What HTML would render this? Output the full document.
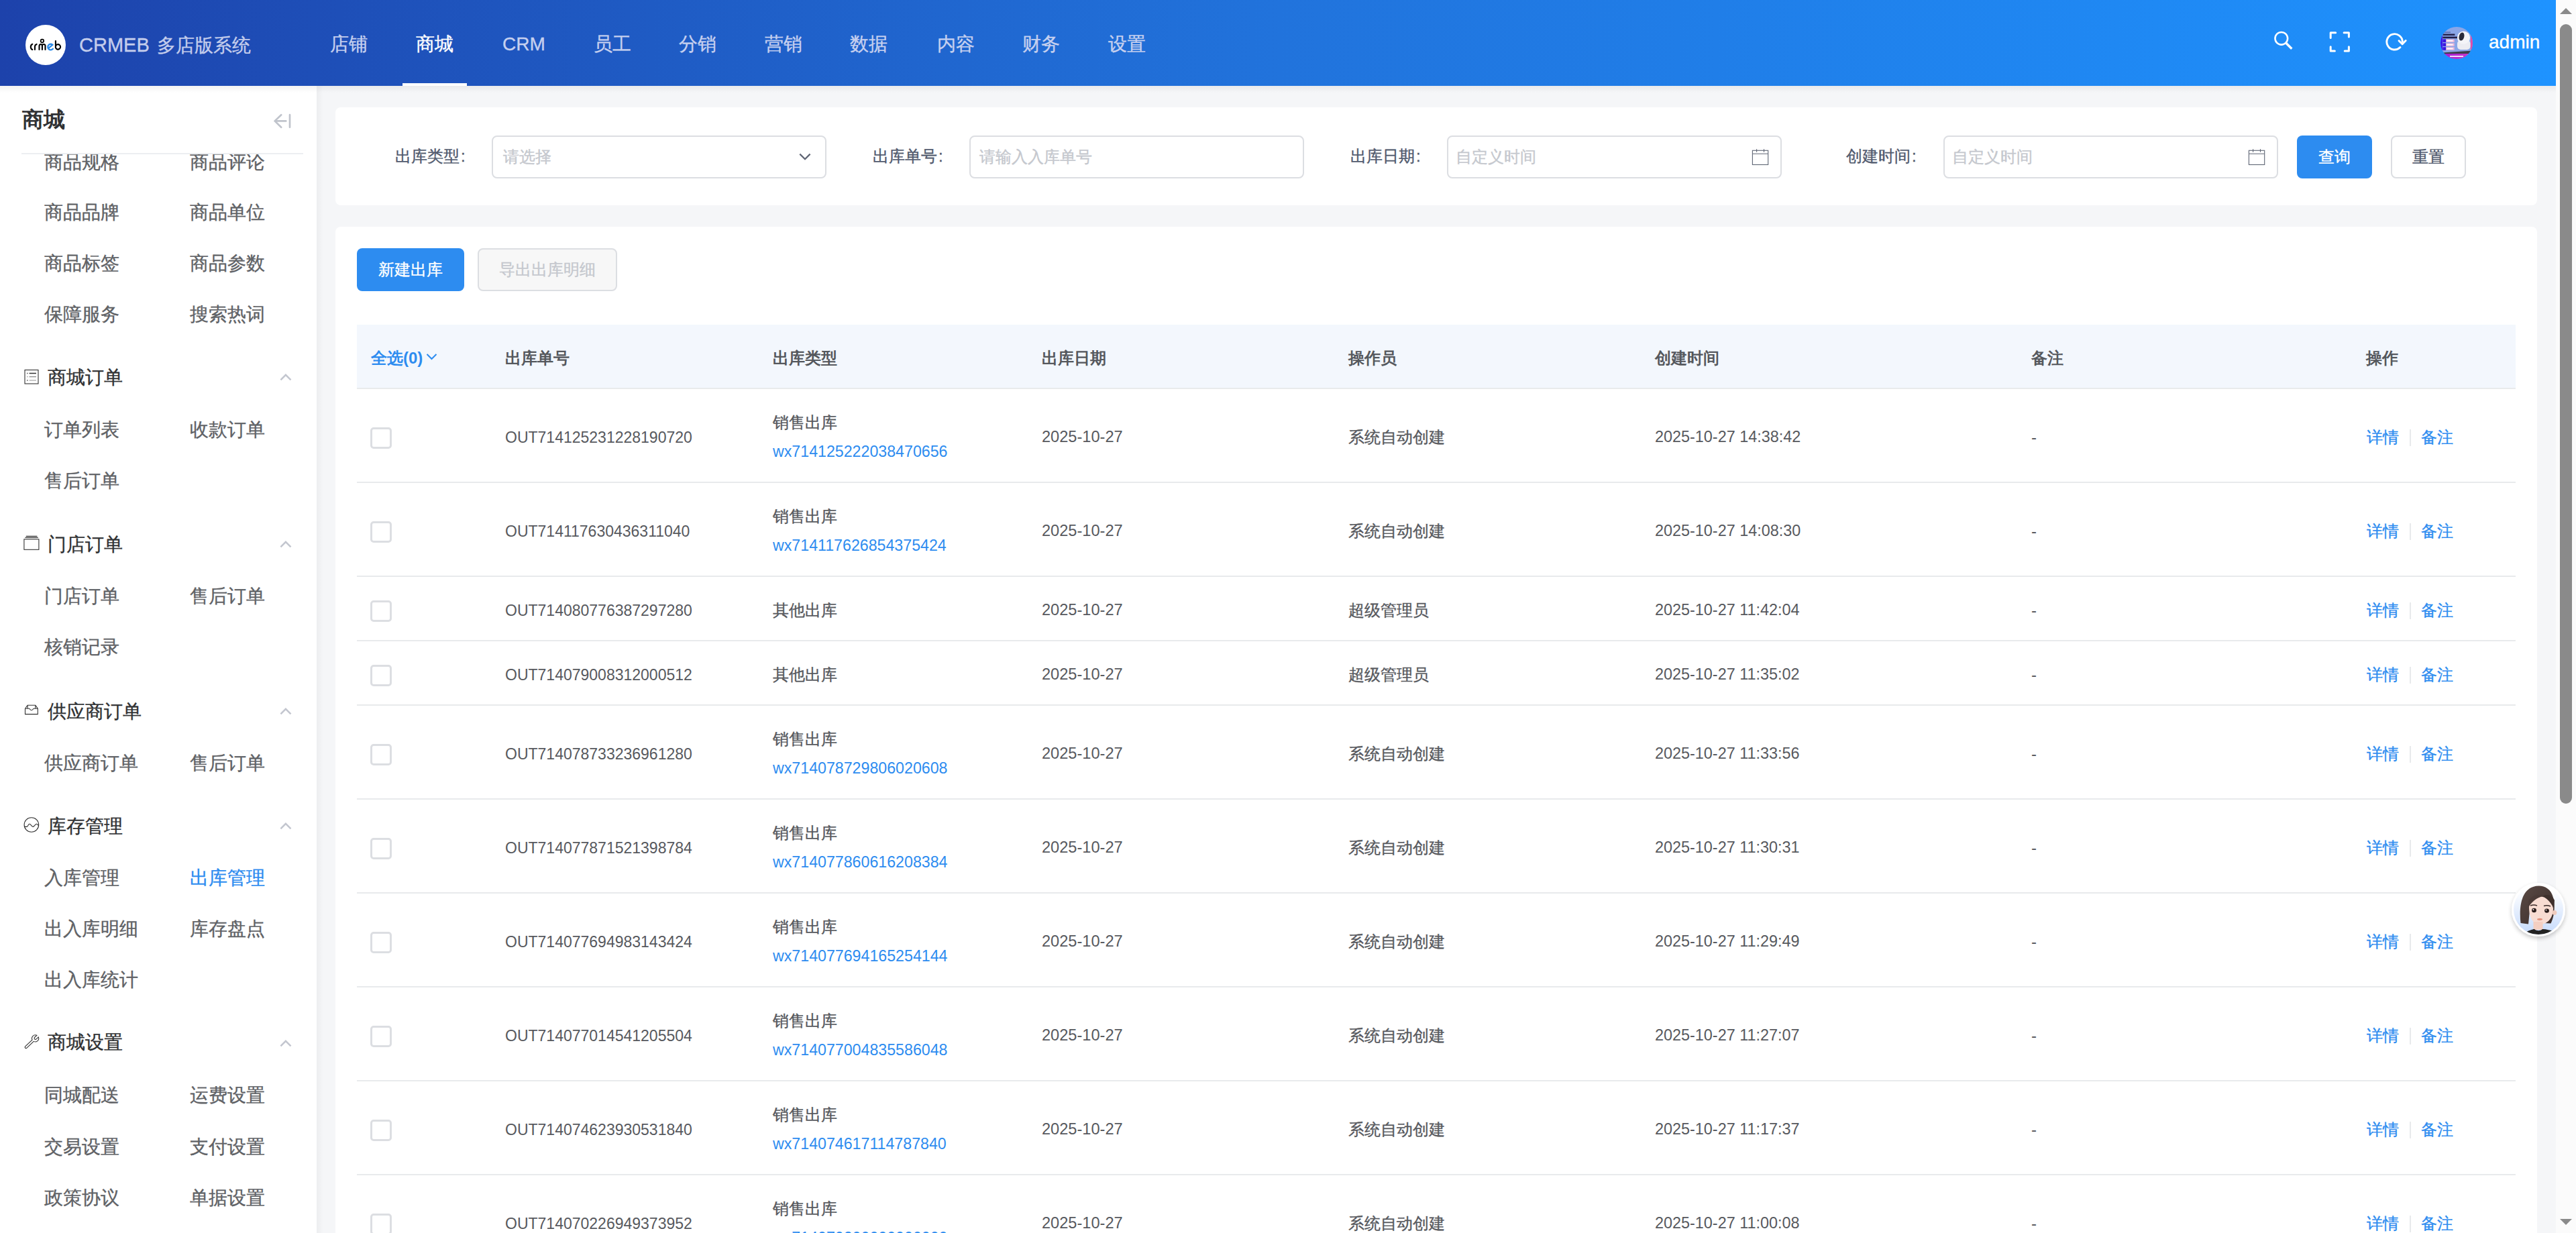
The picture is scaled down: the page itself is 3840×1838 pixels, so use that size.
<!DOCTYPE html>
<html><head><meta charset="utf-8"><style>
*{box-sizing:border-box;margin:0;padding:0}
html,body{width:3840px;height:1838px;overflow:hidden;background:#f5f6f8;font-family:"Liberation Sans",sans-serif}
.a{position:absolute}
.t{position:absolute;white-space:nowrap;line-height:1;-webkit-text-stroke:0.35px currentColor}
#hdr{left:0;top:0;width:3810px;height:128px;background:linear-gradient(90deg,#1d42ab 0%,#2173dc 50%,#1e93ff 100%)}
.nav{font-size:28px;color:#c6d0ef}
.nav.on{color:#fff}
#side{left:0;top:128px;width:472px;height:1710px;background:#fff;overflow:hidden}
.sg{font-size:28px;color:#303133}
.si{font-size:28px;color:#606266}
.card{position:absolute;background:#fff;border-radius:8px}
.lbl{font-size:24px;color:#515a6e}
.inp{position:absolute;border:2px solid #dcdee2;border-radius:8px;background:#fff;height:64px;width:499px;top:202px}
.ph{font-size:24px;color:#c5c8ce}
.th{font-size:24px;font-weight:bold;color:#55585d;-webkit-text-stroke:0}
.ns{-webkit-text-stroke:0}
.td{font-size:24px;color:#57595e}
.lk{font-size:24px;color:#2d8cf0}
.cb{position:absolute;width:32px;height:32px;border:3px solid #dcdee2;border-radius:5px;background:#fff}
.rl{position:absolute;left:532px;width:3218px;height:2px;background:#e8eaec}
</style></head><body>
<div id="hdr" class="a">
<svg class="a" style="left:38px;top:37px" width="60" height="60" viewBox="0 0 60 60">
<circle cx="30" cy="30" r="30" fill="#fff"/>
<g fill="none" stroke="#000" stroke-width="2.1" stroke-linecap="round">
<path d="M10.3 28.8 A4.6 4.6 0 0 0 10.3 37"/>
<path d="M14 37 V32.5 Q14 29.6 16.6 28.9"/>
<path d="M20.5 37 V31.5 A2.2 2.5 0 0 1 24.9 31.5 V37 M24.9 31.5 A2.3 2.5 0 0 1 29.5 31.5 V37"/>
<circle cx="24.9" cy="24" r="2.3" stroke-width="1.7"/>
<path d="M44.9 24 V34 A3.7 3.7 0 1 0 45 31.5"/>
</g>
<path d="M34 35.2 L40.4 29.8 A4.3 4.3 0 1 0 40.9 35.8" fill="none" stroke="#2a8ae8" stroke-width="2.3" stroke-linecap="round"/>
</svg>
<div class="t " style="left:118px;top:67px;transform:translateY(-50%);font-size:29px;color:#c4cdec">CRMEB<span style="margin-left:3px"> </span><span style="font-size:28px">多店版系统</span></div>
<div class="t nav" style="left:492px;top:66px;transform:translateY(-50%);">店铺</div>
<div class="t nav on" style="left:620px;top:66px;transform:translateY(-50%);">商城</div>
<div class="t nav" style="left:749px;top:66px;transform:translateY(-50%);">CRM</div>
<div class="t nav" style="left:885px;top:66px;transform:translateY(-50%);">员工</div>
<div class="t nav" style="left:1012px;top:66px;transform:translateY(-50%);">分销</div>
<div class="t nav" style="left:1140px;top:66px;transform:translateY(-50%);">营销</div>
<div class="t nav" style="left:1267px;top:66px;transform:translateY(-50%);">数据</div>
<div class="t nav" style="left:1397px;top:66px;transform:translateY(-50%);">内容</div>
<div class="t nav" style="left:1524px;top:66px;transform:translateY(-50%);">财务</div>
<div class="t nav" style="left:1652px;top:66px;transform:translateY(-50%);">设置</div>
<div class="a" style="left:600px;top:124px;width:96px;height:4px;background:#fff"></div>
<svg class="a" style="left:3380px;top:38px" width="50" height="45" viewBox="0 0 50 45"><circle cx="20.8" cy="19.3" r="9.35" fill="none" stroke="#fff" stroke-width="2.6"/><path d="M27.3 25.8 L36.3 34.8" stroke="#fff" stroke-width="3.4"/></svg>
<svg class="a" style="left:3462px;top:38px" width="50" height="45" viewBox="0 0 50 45"><path d="M12.2 18.4 V10.8 H19.7 M32.1 10.8 H39.4 V17 M12.2 31.8 V38 H18.4 M33.2 38 H39.4 V31.8" fill="none" stroke="#fff" stroke-width="3" stroke-linecap="round" stroke-linejoin="round"/></svg>
<svg class="a" style="left:3545px;top:40px" width="50" height="45" viewBox="0 0 50 45"><path d="M32.9 30.6 A11.7 11.7 0 1 1 36.3 22.3" fill="none" stroke="#fff" stroke-width="2.9" stroke-linecap="round"/><path d="M31 20.8 L36.1 25.8 L41.2 20.5" fill="none" stroke="#fff" stroke-width="2.9" stroke-linecap="round" stroke-linejoin="round"/></svg>
<svg class="a" style="left:3638px;top:40px" width="48" height="48" viewBox="0 0 48 48"><defs><clipPath id="av"><circle cx="24" cy="24" r="24"/></clipPath><linearGradient id="avb" x1="0" y1="0" x2="1" y2="0"><stop offset="0" stop-color="#9a18d8"/><stop offset="1" stop-color="#d03cc8"/></linearGradient></defs><g clip-path="url(#av)">
<rect width="48" height="48" fill="#8aa6e8"/>
<rect x="0" y="0" width="3" height="48" fill="#3a18e8"/><rect x="45" y="0" width="3" height="48" fill="#e04aa8"/>
<rect x="5" y="7.5" width="10" height="1.2" fill="#5060a0"/><rect x="3.4" y="10.5" width="18" height="2.4" fill="#22204a"/><rect x="3.4" y="14.6" width="23" height="2.6" fill="#22204a"/>
<rect x="3.4" y="18.4" width="4.6" height="4.6" fill="#3a14e0"/><rect x="8.4" y="18.6" width="12.3" height="4.2" fill="#f2b8d8"/><rect x="9.5" y="19.8" width="9" height="1.8" fill="#fff"/>
<rect x="3.4" y="24.3" width="4.6" height="4.6" fill="#3a14e0"/><rect x="8.4" y="24.5" width="12.3" height="4.2" fill="#f2b8d8"/><rect x="9.5" y="25.7" width="9" height="1.8" fill="#fff"/>
<rect x="3.4" y="30.2" width="4.6" height="4.6" fill="#3a14e0"/><rect x="8.4" y="30.4" width="12.3" height="4.2" fill="#f2b8d8"/><rect x="9.5" y="31.6" width="9" height="1.8" fill="#fff"/>
<rect x="25" y="20" width="19.5" height="14" rx="5" fill="#ececf2"/><circle cx="34.5" cy="16" r="9.6" fill="#f4f4f8"/>
<ellipse cx="31.5" cy="14.5" rx="3.8" ry="6.2" transform="rotate(15 31.5 14.5)" fill="#2a2a3a"/>
<path d="M3 38.5 L48 35.5 L48 40 L3 41.5Z" fill="#3c3c48"/>
<rect x="0" y="40" width="48" height="8" fill="url(#avb)"/>
<rect x="14" y="43" width="20" height="2" fill="#f0d8f8"/>
</g></svg>
<div class="t " style="left:3710px;top:63px;transform:translateY(-50%);font-size:28px;color:#fff">admin</div>
</div>
<div class="a" style="left:0;top:128px;width:3810px;height:10px;background:linear-gradient(rgba(0,0,0,0.05),rgba(0,0,0,0));z-index:5"></div>
<div class="a" style="left:3810px;top:0;width:30px;height:1838px;background:#fbfbfb"></div>
<svg class="a" style="left:3816px;top:11px" width="18" height="10"><path d="M0 10 L9 1 L18 10Z" fill="#8a8a8a"/></svg>
<div class="a" style="left:3816px;top:36px;width:18px;height:1162px;border-radius:9px;background:#8a8a8a"></div>
<svg class="a" style="left:3816px;top:1817px" width="18" height="10"><path d="M0 0 L9 9 L18 0Z" fill="#8a8a8a"/></svg>
<div id="side" class="a">
</div>
<div class="t ns" style="left:33px;top:178px;transform:translateY(-50%);font-size:32px;font-weight:bold;color:#303133">商城</div>
<svg class="a" style="left:395px;top:160px" width="50" height="40" viewBox="395 160 50 40"><path d="M419.2 171.2 L409.6 180.4 L419.2 189.7 M409.6 180.4 H426.3 M432 171.2 V189.7" fill="none" stroke="#c0c4cc" stroke-width="2.7" stroke-linecap="round" stroke-linejoin="round"/></svg>
<div class="a" style="left:32px;top:228px;width:420px;height:2px;background:#eceef1;z-index:3"></div>
<div class="a" style="left:0;top:229px;width:472px;height:1609px;overflow:hidden">
<div class="t si" style="left:66px;top:13px;transform:translateY(-50%);">商品规格</div>
<div class="t si" style="left:283px;top:13px;transform:translateY(-50%);">商品评论</div>
<div class="t si" style="left:66px;top:88px;transform:translateY(-50%);">商品品牌</div>
<div class="t si" style="left:283px;top:88px;transform:translateY(-50%);">商品单位</div>
<div class="t si" style="left:66px;top:164px;transform:translateY(-50%);">商品标签</div>
<div class="t si" style="left:283px;top:164px;transform:translateY(-50%);">商品参数</div>
<div class="t si" style="left:66px;top:240px;transform:translateY(-50%);">保障服务</div>
<div class="t si" style="left:283px;top:240px;transform:translateY(-50%);">搜索热词</div>
<div class="t sg" style="left:71px;top:333.5px;transform:translateY(-50%);">商城订单</div>
<div class="t si" style="left:66px;top:412px;transform:translateY(-50%);">订单列表</div>
<div class="t si" style="left:283px;top:412px;transform:translateY(-50%);">收款订单</div>
<div class="t si" style="left:66px;top:488px;transform:translateY(-50%);">售后订单</div>
<div class="t sg" style="left:71px;top:582.5px;transform:translateY(-50%);">门店订单</div>
<div class="t si" style="left:66px;top:660px;transform:translateY(-50%);">门店订单</div>
<div class="t si" style="left:283px;top:660px;transform:translateY(-50%);">售后订单</div>
<div class="t si" style="left:66px;top:736px;transform:translateY(-50%);">核销记录</div>
<div class="t sg" style="left:71px;top:831.5px;transform:translateY(-50%);">供应商订单</div>
<div class="t si" style="left:66px;top:909px;transform:translateY(-50%);">供应商订单</div>
<div class="t si" style="left:283px;top:909px;transform:translateY(-50%);">售后订单</div>
<div class="t sg" style="left:71px;top:1002.5px;transform:translateY(-50%);">库存管理</div>
<div class="t si" style="left:66px;top:1080px;transform:translateY(-50%);">入库管理</div>
<div class="t si" style="left:283px;top:1080px;transform:translateY(-50%);color:#2d8cf0">出库管理</div>
<div class="t si" style="left:66px;top:1156px;transform:translateY(-50%);">出入库明细</div>
<div class="t si" style="left:283px;top:1156px;transform:translateY(-50%);">库存盘点</div>
<div class="t si" style="left:66px;top:1232px;transform:translateY(-50%);">出入库统计</div>
<div class="t sg" style="left:71px;top:1325.3px;transform:translateY(-50%);">商城设置</div>
<div class="t si" style="left:66px;top:1404px;transform:translateY(-50%);">同城配送</div>
<div class="t si" style="left:283px;top:1404px;transform:translateY(-50%);">运费设置</div>
<div class="t si" style="left:66px;top:1481px;transform:translateY(-50%);">交易设置</div>
<div class="t si" style="left:283px;top:1481px;transform:translateY(-50%);">支付设置</div>
<div class="t si" style="left:66px;top:1557px;transform:translateY(-50%);">政策协议</div>
<div class="t si" style="left:283px;top:1557px;transform:translateY(-50%);">单据设置</div>
</div>
<svg class="a" style="left:0;top:0;z-index:4" width="472" height="1838" viewBox="0 0 472 1838"><g fill="none" stroke="#333" stroke-width="1.1"><rect x="37" y="551.5" width="20" height="20.5"/><path d="M40.2 556.5h1.2M43.6 556.5H54" stroke="#333" stroke-width="1.3"/><path d="M40.2 561.6h1.2M43.6 561.6H54" stroke="#888" stroke-width="1.3"/><path d="M40.2 567h1.2" stroke="#333" stroke-width="1.3"/><path d="M43.6 567H54" stroke="#bbb" stroke-width="1.6"/><rect x="35.9" y="803.8" width="22" height="15.5"/><path d="M37.5 801.35H56.7M38.8 799.4H55.4" stroke-width="1.1"/><path d="M37.5 1056.2V1064.6H56.3V1056.2L52.8 1051.2H41.1L37.5 1056.2M41.1 1051.2V1056.2M52.8 1051.2V1056.2M37.5 1056.2H43.4C44.5 1056.2 45 1058.8 46.9 1058.8C48.8 1058.8 49.3 1056.2 50.4 1056.2H56.3"/><circle cx="46.9" cy="1229.5" r="10.8"/><path d="M36.3 1232.4H40C41.5 1232.4 42.2 1228.3 44 1228.3C45.8 1228.3 47.4 1232.4 49.2 1232.4C51 1232.4 52.6 1228.3 54.5 1228.3C56 1228.3 56.8 1230 57.6 1230.8"/><path transform="translate(38.8 1561) rotate(-43.5)" d="M0 -1.6L14.2 -1.6A5.1 5.1 0 0 1 23.77 -1.8L19.5 -1.8A1.8 1.8 0 0 0 19.5 1.8L23.77 1.8A5.1 5.1 0 0 1 14.2 1.6L0 1.6A1.6 1.6 0 0 1 0 -1.6Z"/></g><g fill="none" stroke="#c3c6cf" stroke-width="2.5"><path d="M418.4 566.4L425.9 558.8L433.5 566.4"/><path d="M418.4 815.4L425.9 807.8L433.5 815.4"/><path d="M418.4 1064.4L425.9 1056.8L433.5 1064.4"/><path d="M418.4 1235.4L425.9 1227.8L433.5 1235.4"/><path d="M418.4 1559.4L425.9 1551.8L433.5 1559.4"/></g></svg>
<div class="a" style="left:472px;top:128px;width:10px;height:1710px;background:linear-gradient(90deg,rgba(0,0,0,0.035),rgba(0,0,0,0))"></div>
<div class="card" style="left:500px;top:160px;width:3282px;height:146px"></div>
<div class="t lbl" style="left:589px;top:233px;transform:translateY(-50%);">出库类型<span style="margin-left:2px">:</span></div>
<div class="t lbl" style="left:1301px;top:233px;transform:translateY(-50%);">出库单号<span style="margin-left:2px">:</span></div>
<div class="t lbl" style="left:2013px;top:233px;transform:translateY(-50%);">出库日期<span style="margin-left:2px">:</span></div>
<div class="t lbl" style="left:2752px;top:233px;transform:translateY(-50%);">创建时间<span style="margin-left:2px">:</span></div>
<div class="inp" style="left:733px"></div>
<div class="t ph" style="left:750px;top:234px;transform:translateY(-50%);">请选择</div>
<svg class="a" style="left:1173px;top:215px" width="50" height="40" viewBox="1173 215 50 40"><path d="M1192.3 229.6 L1200 237.2 L1207.6 229.6" fill="none" stroke="#5f6574" stroke-width="2.3"/></svg>
<div class="inp" style="left:1445px"></div>
<div class="t ph" style="left:1460px;top:234px;transform:translateY(-50%);">请输入入库单号</div>
<div class="inp" style="left:2157px"></div>
<div class="t ph" style="left:2170px;top:234px;transform:translateY(-50%);">自定义时间</div>
<svg class="a" style="left:2597px;top:215px" width="50" height="40" viewBox="2597 215 50 40"><rect x="2612.4" y="224.3" width="23.3" height="21.2" fill="none" stroke="#5f6574" stroke-width="1.1"/><path d="M2612.4 229.2H2635.7M2618.6 222.2V226.8M2629.5 222.2V226.8" stroke="#5f6574" stroke-width="1.1"/></svg>
<div class="inp" style="left:2897px"></div>
<div class="t ph" style="left:2910px;top:234px;transform:translateY(-50%);">自定义时间</div>
<svg class="a" style="left:3337px;top:215px" width="50" height="40" viewBox="3337 215 50 40"><rect x="3352.4" y="224.3" width="23.3" height="21.2" fill="none" stroke="#5f6574" stroke-width="1.1"/><path d="M3352.4 229.2H3375.7M3358.6 222.2V226.8M3369.5 222.2V226.8" stroke="#5f6574" stroke-width="1.1"/></svg>
<div class="a" style="left:3424px;top:202px;width:112px;height:64px;background:#2d8cf0;border-radius:8px"></div>
<div class="t " style="left:3456px;top:234px;transform:translateY(-50%);font-size:24px;color:#fff">查询</div>
<div class="a" style="left:3564px;top:202px;width:112px;height:64px;border:2px solid #dcdee2;border-radius:8px;background:#fff"></div>
<div class="t " style="left:3596px;top:234px;transform:translateY(-50%);font-size:24px;color:#515a6e">重置</div>
<div class="card" style="left:500px;top:338px;width:3282px;height:1600px"></div>
<div class="a" style="left:532px;top:370px;width:160px;height:64px;background:#2d8cf0;border-radius:8px"></div>
<div class="t " style="left:564px;top:402px;transform:translateY(-50%);font-size:24px;color:#fff">新建出库</div>
<div class="a" style="left:712px;top:370px;width:208px;height:64px;background:#f7f7f7;border:2px solid #dcdee2;border-radius:8px"></div>
<div class="t " style="left:744px;top:402px;transform:translateY(-50%);font-size:24px;color:#c5c8ce">导出出库明细</div>
<div class="a" style="left:532px;top:484px;width:3218px;height:95px;background:#f3f7fd"></div>
<div class="rl" style="top:578px"></div>
<div class="t ns" style="left:553px;top:534px;transform:translateY(-50%);font-size:24px;font-weight:bold;color:#2d8cf0">全选(0)</div>
<svg class="a" style="left:630px;top:520px" width="26" height="22" viewBox="630 520 26 22"><path d="M636.5 528 L643.5 535 L650.5 528" fill="none" stroke="#2d8cf0" stroke-width="2.1"/></svg>
<div class="t th" style="left:753px;top:534px;transform:translateY(-50%);">出库单号</div>
<div class="t th" style="left:1152px;top:534px;transform:translateY(-50%);">出库类型</div>
<div class="t th" style="left:1553px;top:534px;transform:translateY(-50%);">出库日期</div>
<div class="t th" style="left:2010px;top:534px;transform:translateY(-50%);">操作员</div>
<div class="t th" style="left:2467px;top:534px;transform:translateY(-50%);">创建时间</div>
<div class="t th" style="left:3028px;top:534px;transform:translateY(-50%);">备注</div>
<div class="t th" style="left:3527px;top:534px;transform:translateY(-50%);">操作</div>
<div class="cb" style="left:552px;top:637.0px"></div>
<div class="t td ns" style="left:753px;top:652.0px;transform:translateY(-50%);font-size:23px">OUT714125231228190720</div>
<div class="t td" style="left:1152px;top:630.0px;transform:translateY(-50%);">销售出库</div>
<div class="t lk ns" style="left:1152px;top:674.0px;transform:translateY(-50%);font-size:23.2px">wx714125222038470656</div>
<div class="t td ns" style="left:1553px;top:652.0px;transform:translateY(-50%);font-size:23.6px">2025-10-27</div>
<div class="t td" style="left:2010px;top:652.0px;transform:translateY(-50%);">系统自动创建</div>
<div class="t td ns" style="left:2467px;top:652.0px;transform:translateY(-50%);font-size:23.4px">2025-10-27 14:38:42</div>
<div class="t td ns" style="left:3028px;top:652.0px;transform:translateY(-50%);">-</div>
<div class="t lk" style="left:3528px;top:652.0px;transform:translateY(-50%);">详情</div>
<div class="a" style="left:3592px;top:640.0px;width:2px;height:25px;background:#e8eaec"></div>
<div class="t lk" style="left:3609px;top:652.0px;transform:translateY(-50%);">备注</div>
<div class="rl" style="top:718px"></div>
<div class="cb" style="left:552px;top:777.0px"></div>
<div class="t td ns" style="left:753px;top:792.0px;transform:translateY(-50%);font-size:23px">OUT714117630436311040</div>
<div class="t td" style="left:1152px;top:770.0px;transform:translateY(-50%);">销售出库</div>
<div class="t lk ns" style="left:1152px;top:814.0px;transform:translateY(-50%);font-size:23.2px">wx714117626854375424</div>
<div class="t td ns" style="left:1553px;top:792.0px;transform:translateY(-50%);font-size:23.6px">2025-10-27</div>
<div class="t td" style="left:2010px;top:792.0px;transform:translateY(-50%);">系统自动创建</div>
<div class="t td ns" style="left:2467px;top:792.0px;transform:translateY(-50%);font-size:23.4px">2025-10-27 14:08:30</div>
<div class="t td ns" style="left:3028px;top:792.0px;transform:translateY(-50%);">-</div>
<div class="t lk" style="left:3528px;top:792.0px;transform:translateY(-50%);">详情</div>
<div class="a" style="left:3592px;top:780.0px;width:2px;height:25px;background:#e8eaec"></div>
<div class="t lk" style="left:3609px;top:792.0px;transform:translateY(-50%);">备注</div>
<div class="rl" style="top:858px"></div>
<div class="cb" style="left:552px;top:895.0px"></div>
<div class="t td ns" style="left:753px;top:910.0px;transform:translateY(-50%);font-size:23px">OUT714080776387297280</div>
<div class="t td" style="left:1152px;top:910.0px;transform:translateY(-50%);">其他出库</div>
<div class="t td ns" style="left:1553px;top:910.0px;transform:translateY(-50%);font-size:23.6px">2025-10-27</div>
<div class="t td" style="left:2010px;top:910.0px;transform:translateY(-50%);">超级管理员</div>
<div class="t td ns" style="left:2467px;top:910.0px;transform:translateY(-50%);font-size:23.4px">2025-10-27 11:42:04</div>
<div class="t td ns" style="left:3028px;top:910.0px;transform:translateY(-50%);">-</div>
<div class="t lk" style="left:3528px;top:910.0px;transform:translateY(-50%);">详情</div>
<div class="a" style="left:3592px;top:898.0px;width:2px;height:25px;background:#e8eaec"></div>
<div class="t lk" style="left:3609px;top:910.0px;transform:translateY(-50%);">备注</div>
<div class="rl" style="top:954px"></div>
<div class="cb" style="left:552px;top:991.0px"></div>
<div class="t td ns" style="left:753px;top:1006.0px;transform:translateY(-50%);font-size:23px">OUT714079008312000512</div>
<div class="t td" style="left:1152px;top:1006.0px;transform:translateY(-50%);">其他出库</div>
<div class="t td ns" style="left:1553px;top:1006.0px;transform:translateY(-50%);font-size:23.6px">2025-10-27</div>
<div class="t td" style="left:2010px;top:1006.0px;transform:translateY(-50%);">超级管理员</div>
<div class="t td ns" style="left:2467px;top:1006.0px;transform:translateY(-50%);font-size:23.4px">2025-10-27 11:35:02</div>
<div class="t td ns" style="left:3028px;top:1006.0px;transform:translateY(-50%);">-</div>
<div class="t lk" style="left:3528px;top:1006.0px;transform:translateY(-50%);">详情</div>
<div class="a" style="left:3592px;top:994.0px;width:2px;height:25px;background:#e8eaec"></div>
<div class="t lk" style="left:3609px;top:1006.0px;transform:translateY(-50%);">备注</div>
<div class="rl" style="top:1050px"></div>
<div class="cb" style="left:552px;top:1109.0px"></div>
<div class="t td ns" style="left:753px;top:1124.0px;transform:translateY(-50%);font-size:23px">OUT714078733236961280</div>
<div class="t td" style="left:1152px;top:1102.0px;transform:translateY(-50%);">销售出库</div>
<div class="t lk ns" style="left:1152px;top:1146.0px;transform:translateY(-50%);font-size:23.2px">wx714078729806020608</div>
<div class="t td ns" style="left:1553px;top:1124.0px;transform:translateY(-50%);font-size:23.6px">2025-10-27</div>
<div class="t td" style="left:2010px;top:1124.0px;transform:translateY(-50%);">系统自动创建</div>
<div class="t td ns" style="left:2467px;top:1124.0px;transform:translateY(-50%);font-size:23.4px">2025-10-27 11:33:56</div>
<div class="t td ns" style="left:3028px;top:1124.0px;transform:translateY(-50%);">-</div>
<div class="t lk" style="left:3528px;top:1124.0px;transform:translateY(-50%);">详情</div>
<div class="a" style="left:3592px;top:1112.0px;width:2px;height:25px;background:#e8eaec"></div>
<div class="t lk" style="left:3609px;top:1124.0px;transform:translateY(-50%);">备注</div>
<div class="rl" style="top:1190px"></div>
<div class="cb" style="left:552px;top:1249.0px"></div>
<div class="t td ns" style="left:753px;top:1264.0px;transform:translateY(-50%);font-size:23px">OUT714077871521398784</div>
<div class="t td" style="left:1152px;top:1242.0px;transform:translateY(-50%);">销售出库</div>
<div class="t lk ns" style="left:1152px;top:1286.0px;transform:translateY(-50%);font-size:23.2px">wx714077860616208384</div>
<div class="t td ns" style="left:1553px;top:1264.0px;transform:translateY(-50%);font-size:23.6px">2025-10-27</div>
<div class="t td" style="left:2010px;top:1264.0px;transform:translateY(-50%);">系统自动创建</div>
<div class="t td ns" style="left:2467px;top:1264.0px;transform:translateY(-50%);font-size:23.4px">2025-10-27 11:30:31</div>
<div class="t td ns" style="left:3028px;top:1264.0px;transform:translateY(-50%);">-</div>
<div class="t lk" style="left:3528px;top:1264.0px;transform:translateY(-50%);">详情</div>
<div class="a" style="left:3592px;top:1252.0px;width:2px;height:25px;background:#e8eaec"></div>
<div class="t lk" style="left:3609px;top:1264.0px;transform:translateY(-50%);">备注</div>
<div class="rl" style="top:1330px"></div>
<div class="cb" style="left:552px;top:1389.0px"></div>
<div class="t td ns" style="left:753px;top:1404.0px;transform:translateY(-50%);font-size:23px">OUT714077694983143424</div>
<div class="t td" style="left:1152px;top:1382.0px;transform:translateY(-50%);">销售出库</div>
<div class="t lk ns" style="left:1152px;top:1426.0px;transform:translateY(-50%);font-size:23.2px">wx714077694165254144</div>
<div class="t td ns" style="left:1553px;top:1404.0px;transform:translateY(-50%);font-size:23.6px">2025-10-27</div>
<div class="t td" style="left:2010px;top:1404.0px;transform:translateY(-50%);">系统自动创建</div>
<div class="t td ns" style="left:2467px;top:1404.0px;transform:translateY(-50%);font-size:23.4px">2025-10-27 11:29:49</div>
<div class="t td ns" style="left:3028px;top:1404.0px;transform:translateY(-50%);">-</div>
<div class="t lk" style="left:3528px;top:1404.0px;transform:translateY(-50%);">详情</div>
<div class="a" style="left:3592px;top:1392.0px;width:2px;height:25px;background:#e8eaec"></div>
<div class="t lk" style="left:3609px;top:1404.0px;transform:translateY(-50%);">备注</div>
<div class="rl" style="top:1470px"></div>
<div class="cb" style="left:552px;top:1529.0px"></div>
<div class="t td ns" style="left:753px;top:1544.0px;transform:translateY(-50%);font-size:23px">OUT714077014541205504</div>
<div class="t td" style="left:1152px;top:1522.0px;transform:translateY(-50%);">销售出库</div>
<div class="t lk ns" style="left:1152px;top:1566.0px;transform:translateY(-50%);font-size:23.2px">wx714077004835586048</div>
<div class="t td ns" style="left:1553px;top:1544.0px;transform:translateY(-50%);font-size:23.6px">2025-10-27</div>
<div class="t td" style="left:2010px;top:1544.0px;transform:translateY(-50%);">系统自动创建</div>
<div class="t td ns" style="left:2467px;top:1544.0px;transform:translateY(-50%);font-size:23.4px">2025-10-27 11:27:07</div>
<div class="t td ns" style="left:3028px;top:1544.0px;transform:translateY(-50%);">-</div>
<div class="t lk" style="left:3528px;top:1544.0px;transform:translateY(-50%);">详情</div>
<div class="a" style="left:3592px;top:1532.0px;width:2px;height:25px;background:#e8eaec"></div>
<div class="t lk" style="left:3609px;top:1544.0px;transform:translateY(-50%);">备注</div>
<div class="rl" style="top:1610px"></div>
<div class="cb" style="left:552px;top:1669.0px"></div>
<div class="t td ns" style="left:753px;top:1684.0px;transform:translateY(-50%);font-size:23px">OUT714074623930531840</div>
<div class="t td" style="left:1152px;top:1662.0px;transform:translateY(-50%);">销售出库</div>
<div class="t lk ns" style="left:1152px;top:1706.0px;transform:translateY(-50%);font-size:23.2px">wx714074617114787840</div>
<div class="t td ns" style="left:1553px;top:1684.0px;transform:translateY(-50%);font-size:23.6px">2025-10-27</div>
<div class="t td" style="left:2010px;top:1684.0px;transform:translateY(-50%);">系统自动创建</div>
<div class="t td ns" style="left:2467px;top:1684.0px;transform:translateY(-50%);font-size:23.4px">2025-10-27 11:17:37</div>
<div class="t td ns" style="left:3028px;top:1684.0px;transform:translateY(-50%);">-</div>
<div class="t lk" style="left:3528px;top:1684.0px;transform:translateY(-50%);">详情</div>
<div class="a" style="left:3592px;top:1672.0px;width:2px;height:25px;background:#e8eaec"></div>
<div class="t lk" style="left:3609px;top:1684.0px;transform:translateY(-50%);">备注</div>
<div class="rl" style="top:1750px"></div>
<div class="cb" style="left:552px;top:1809.0px"></div>
<div class="t td ns" style="left:753px;top:1824.0px;transform:translateY(-50%);font-size:23px">OUT714070226949373952</div>
<div class="t td" style="left:1152px;top:1802.0px;transform:translateY(-50%);">销售出库</div>
<div class="t lk ns" style="left:1152px;top:1846.0px;transform:translateY(-50%);font-size:23.2px">wx714070200000000000</div>
<div class="t td ns" style="left:1553px;top:1824.0px;transform:translateY(-50%);font-size:23.6px">2025-10-27</div>
<div class="t td" style="left:2010px;top:1824.0px;transform:translateY(-50%);">系统自动创建</div>
<div class="t td ns" style="left:2467px;top:1824.0px;transform:translateY(-50%);font-size:23.4px">2025-10-27 11:00:08</div>
<div class="t td ns" style="left:3028px;top:1824.0px;transform:translateY(-50%);">-</div>
<div class="t lk" style="left:3528px;top:1824.0px;transform:translateY(-50%);">详情</div>
<div class="a" style="left:3592px;top:1812.0px;width:2px;height:25px;background:#e8eaec"></div>
<div class="t lk" style="left:3609px;top:1824.0px;transform:translateY(-50%);">备注</div>
<div class="rl" style="top:1890px"></div>
<svg class="a" style="left:3730px;top:1302px;z-index:10" width="110" height="110" viewBox="-6 -6 110 110">
<defs><linearGradient id="fg" x1="0" y1="0" x2="0" y2="1"><stop offset="0.2" stop-color="#ffffff"/><stop offset="1" stop-color="#bcd4fb"/></linearGradient>
<clipPath id="fc"><circle cx="48" cy="48" r="37"/></clipPath>
<filter id="sh" x="-30%" y="-30%" width="160%" height="160%"><feGaussianBlur in="SourceAlpha" stdDeviation="3"/><feOffset dy="3"/><feComponentTransfer><feFuncA type="linear" slope="0.22"/></feComponentTransfer><feMerge><feMergeNode/><feMergeNode in="SourceGraphic"/></feMerge></filter>
<linearGradient id="hair" x1="0" y1="0" x2="1" y2="1"><stop offset="0" stop-color="#5a4a45"/><stop offset="1" stop-color="#3a2c29"/></linearGradient></defs>
<circle cx="48" cy="48" r="40" fill="#fff" filter="url(#sh)"/>
<g clip-path="url(#fc)"><rect width="96" height="96" fill="url(#fg)"/>
<path d="M21.5 68 C19 45 22 20 40 14 C52 10 66 14 70 30 C73 42 72 58 66.5 68.5 L55 68 L55 40 L36 40 L33 69.5Z" fill="url(#hair)"/>
<path d="M34 44 C34 34 42 28 50 28 C60 29 70 36 70 46 C70 60 62 70 50 70 C40 70 34 60 34 44Z" fill="#f8dcd2"/>
<path d="M33.5 44 C38 36 46 30 54.5 28 C48 24 38 26 33 36Z" fill="#4b3b37"/>
<path d="M54.5 28 C62 32 69 40 71 48 L72 34 C68 26 60 24 54.5 28Z" fill="#3e302c"/>
<circle cx="72" cy="52.5" r="3.4" fill="#f0cbbd"/>
<path d="M36 42 Q41 40 46 42" fill="none" stroke="#3a2a28" stroke-width="1.5"/><path d="M56 42.5 Q61 41 66 43" fill="none" stroke="#3a2a28" stroke-width="1.5"/>
<ellipse cx="41.5" cy="49" rx="3.4" ry="3.2" fill="#2a1c1a"/><ellipse cx="60.5" cy="49.6" rx="3.4" ry="3.2" fill="#2a1c1a"/>
<circle cx="40.5" cy="48" r="0.9" fill="#fff"/><circle cx="59.5" cy="48.6" r="0.9" fill="#fff"/>
<ellipse cx="50" cy="62.3" rx="4" ry="1.6" fill="#e0907c"/>
<path d="M40.5 66 L40.5 78 L54.5 78 L54.5 66Z" fill="#f4cfc2"/>
<path d="M26 84 C32 79 40 77 42 77 C45 80 51 80 54 77 C60 77 66 79 70 80 L72 96 L24 96Z" fill="#222"/>
</g></svg>
</body></html>
